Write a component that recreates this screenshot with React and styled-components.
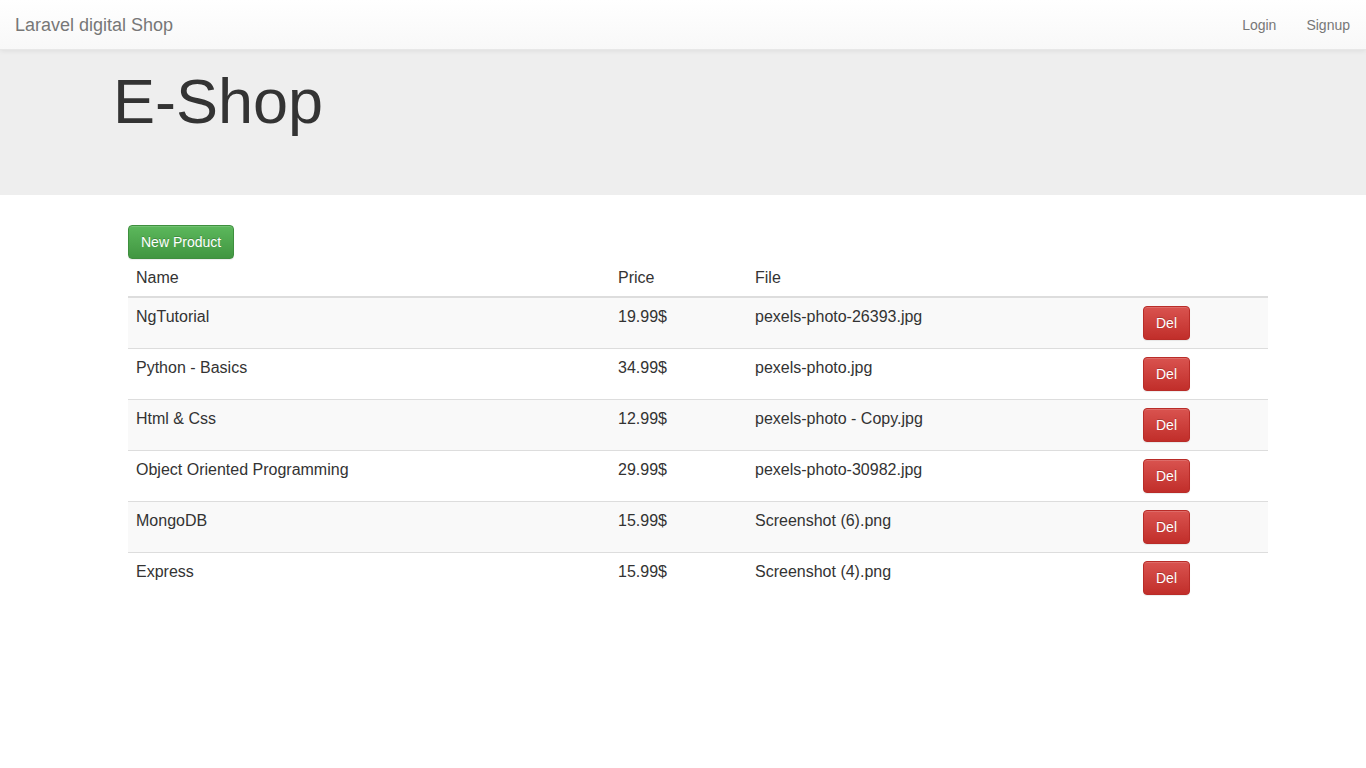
import React from 'react';
import styled, { createGlobalStyle } from 'styled-components';

const products = [
  { name: 'NgTutorial', price: '19.99$', file: 'pexels-photo-26393.jpg' },
  { name: 'Python - Basics', price: '34.99$', file: 'pexels-photo.jpg' },
  { name: 'Html & Css', price: '12.99$', file: 'pexels-photo - Copy.jpg' },
  { name: 'Object Oriented Programming', price: '29.99$', file: 'pexels-photo-30982.jpg' },
  { name: 'MongoDB', price: '15.99$', file: 'Screenshot (6).png' },
  { name: 'Express', price: '15.99$', file: 'Screenshot (4).png' },
];

const App = () => {
  return (
    <>
      <GlobalStyle />
      <Navbar>
        <Brand href="#">Laravel digital Shop</Brand>
        <NavLinks>
          <NavLink href="#">Login</NavLink>
          <NavLink href="#">Signup</NavLink>
        </NavLinks>
      </Navbar>
      <Jumbotron>
        <Container>
          <Title>E-Shop</Title>
        </Container>
      </Jumbotron>
      <Container>
        <Column>
          <Button variant="success">New Product</Button>
          <Table>
            <thead>
              <tr>
                <Th width={482}>Name</Th>
                <Th width={137}>Price</Th>
                <Th width={388}>File</Th>
                <Th />
              </tr>
            </thead>
            <tbody>
              {products.map((p, i) => (
                <Row key={i} striped={i % 2 === 0}>
                  <Td>{p.name}</Td>
                  <Td>{p.price}</Td>
                  <Td>{p.file}</Td>
                  <Td>
                    <Button variant="danger">Del</Button>
                  </Td>
                </Row>
              ))}
            </tbody>
          </Table>
        </Column>
      </Container>
    </>
  );
};

export default App;

const GlobalStyle = createGlobalStyle`
  * { box-sizing: border-box; }
  body {
    margin: 0;
    font-family: "Liberation Sans", Arial, Helvetica, sans-serif;
    font-size: 14px;
    line-height: 1.42857143;
    color: #333;
    background: #fff;
  }
`;

const Navbar = styled.nav`
  display: flex;
  justify-content: space-between;
  align-items: center;
  height: 50px;
  background-image: linear-gradient(to bottom, #fff 0, #f8f8f8 100%);
  border-bottom: 1px solid #e7e7e7;
  box-shadow: inset 0 1px 0 rgba(255, 255, 255, 0.15), 0 1px 5px rgba(0, 0, 0, 0.075);
  position: relative;
  z-index: 2;
`;

const Brand = styled.a`
  padding: 15px;
  font-size: 18px;
  line-height: 20px;
  color: #777;
  text-decoration: none;
  text-shadow: 0 1px 0 rgba(255, 255, 255, 0.25);
`;

const NavLinks = styled.div`
  display: flex;
  margin-right: 1px;
`;

const NavLink = styled.a`
  padding: 15px;
  line-height: 20px;
  color: #777;
  text-decoration: none;
  text-shadow: 0 1px 0 rgba(255, 255, 255, 0.25);
`;

const Jumbotron = styled.div`
  background: #eee;
  padding: 17px 0 49px;
  margin-bottom: 30px;
`;

const Container = styled.div`
  width: 1170px;
  margin: 0 auto;
  padding: 0 15px;
`;

const Title = styled.h1`
  margin: 0 0 10px;
  font-size: 63px;
  font-weight: 500;
  line-height: 1.1;
  color: #333;
`;

const Column = styled.div`
  padding-left: 15px;
  margin-right: -15px;
`;

const Button = styled.button`
  display: inline-block;
  padding: 6px 12px;
  font-family: inherit;
  font-size: 14px;
  line-height: 20px;
  color: #fff;
  border-radius: 4px;
  cursor: pointer;
  text-shadow: 0 -1px 0 rgba(0, 0, 0, 0.2);
  box-shadow: inset 0 1px 0 rgba(255, 255, 255, 0.15), 0 1px 1px rgba(0, 0, 0, 0.075);
  border: 1px solid ${p => (p.variant === 'danger' ? '#b92c28' : '#3e8f3e')};
  background-image: ${p =>
    p.variant === 'danger'
      ? 'linear-gradient(to bottom, #d9534f 0, #c12e2a 100%)'
      : 'linear-gradient(to bottom, #5cb85c 0, #419641 100%)'};
`;

const Table = styled.table`
  width: 100%;
  border-collapse: collapse;
  border-spacing: 0;
  font-size: 16px;
  line-height: 21px;
`;

const Th = styled.th`
  width: ${p => (p.width ? `${p.width}px` : 'auto')};
  padding: 8px;
  text-align: left;
  font-weight: normal;
  vertical-align: bottom;
  border-bottom: 2px solid #ddd;
`;

const Row = styled.tr`
  background: ${p => (p.striped ? '#f9f9f9' : 'transparent')};
`;

const Td = styled.td`
  padding: 8px;
  vertical-align: top;
  border-top: 1px solid #ddd;
`;
